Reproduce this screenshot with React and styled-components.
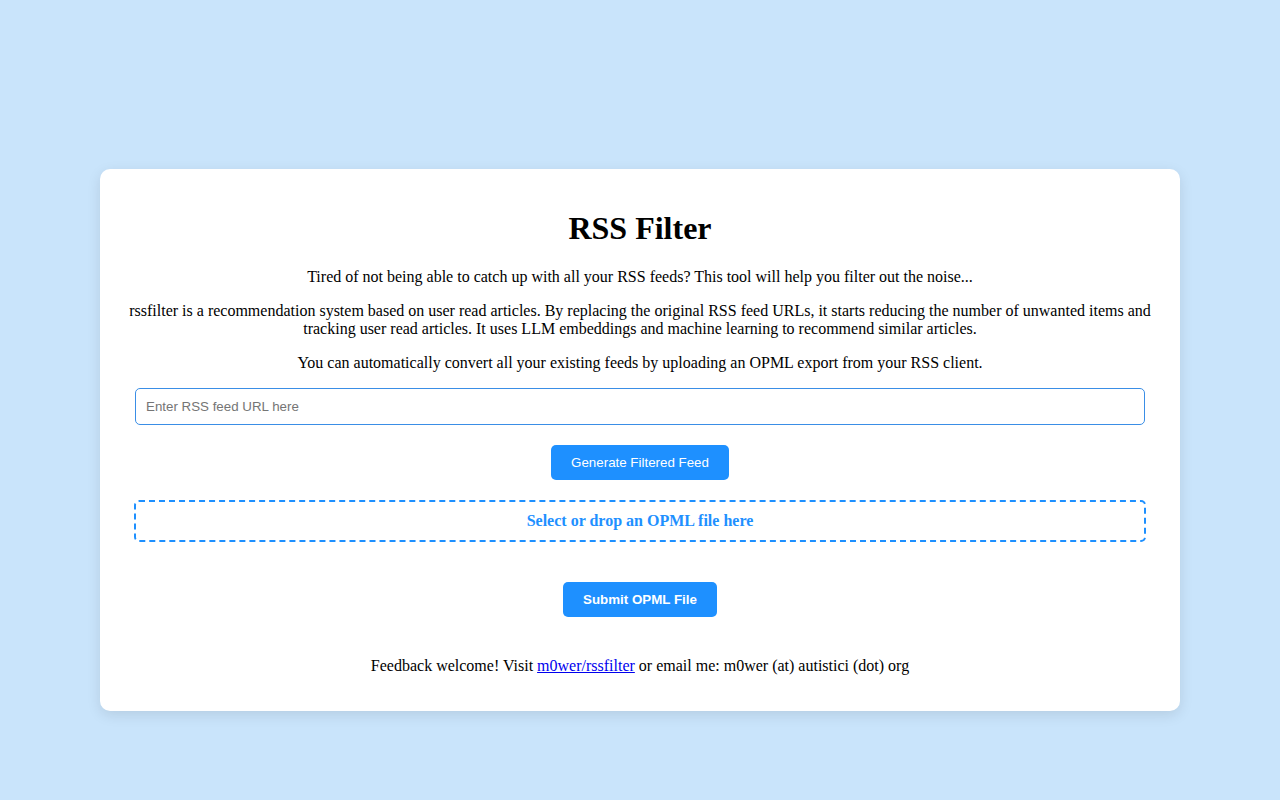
import React from "react";
import styled, { createGlobalStyle } from "styled-components";

const GlobalStyle = createGlobalStyle`
    html, body {
        margin: 0;
        padding: 0;
        background-color: #c9e4fb;
    }
    body {
        font-family: "Liberation Serif", "Times New Roman", serif;
        color: #000;
    }
`

const Page = styled.div`
    min-height: 100vh;
    box-sizing: border-box;
    padding: 169px 100px 40px;
`

const Card = styled.main`
    background-color: white;
    border-radius: 10px;
    box-shadow: 0 4px 14px rgba(0, 0, 0, 0.1);
    padding: 20px;
    text-align: center;

    h1 {
        font-size: 32px;
        margin: 21px 0;
        line-height: 37px;
    }
    p {
        font-size: 16px;
        margin: 16px 0;
        line-height: 18px;
    }
    a {
        color: #0000ee;
    }
`

const Form = styled.div`
    padding: 0 14px;
    display: flex;
    flex-direction: column;
    align-items: center;
    gap: 20px;
`

const UrlInput = styled.input`
    box-sizing: border-box;
    width: calc(100% - 2px);
    height: 37px;
    padding: 10px;
    border: 1px solid #3a8ee6;
    border-radius: 5px;
    font-family: "Liberation Sans", Arial, sans-serif;
    font-size: 13.33px;
    outline: none;

    &::placeholder {
        color: #757575;
    }
`

const Button = styled.button`
    background-color: #1e90ff;
    color: white;
    border: none;
    border-radius: 5px;
    padding: 10px 20px;
    height: 35px;
    font-family: "Liberation Sans", Arial, sans-serif;
    font-size: 13.33px;
    font-weight: ${p => (p.$bold ? "bold" : "normal")};
    cursor: pointer;
`

const DropZone = styled.label`
    box-sizing: border-box;
    width: 100%;
    height: 42px;
    padding: 10px;
    border: 2px dashed #1e90ff;
    border-radius: 5px;
    color: #1e90ff;
    font-weight: bold;
    font-size: 16px;
    line-height: 18px;
    cursor: pointer;

    input {
        display: none;
    }
`

const SubmitRow = styled.div`
    margin-top: 20px;
`

const Footer = styled.p`
    && {
        margin-top: 40px;
    }
`

export default function App() {
    return (
        <>
            <GlobalStyle />
            <Page>
                <Card>
                    <h1>RSS Filter</h1>
                    <p>Tired of not being able to catch up with all your RSS feeds? This tool will help you filter out the noise...</p>
                    <p>rssfilter is a recommendation system based on user read articles. By replacing the original RSS feed URLs, it starts reducing the number of unwanted items and tracking user read articles. It uses LLM embeddings and machine learning to recommend similar articles.</p>
                    <p>You can automatically convert all your existing feeds by uploading an OPML export from your RSS client.</p>
                    <Form>
                        <UrlInput type="text" placeholder="Enter RSS feed URL here" />
                        <Button>Generate Filtered Feed</Button>
                        <DropZone>
                            Select or drop an OPML file here
                            <input type="file" accept=".opml,.xml" />
                        </DropZone>
                        <SubmitRow>
                            <Button $bold>Submit OPML File</Button>
                        </SubmitRow>
                    </Form>
                    <Footer>
                        Feedback welcome! Visit <a href="#">m0wer/rssfilter</a> or email me: m0wer (at) autistici (dot) org
                    </Footer>
                </Card>
            </Page>
        </>
    )
}
